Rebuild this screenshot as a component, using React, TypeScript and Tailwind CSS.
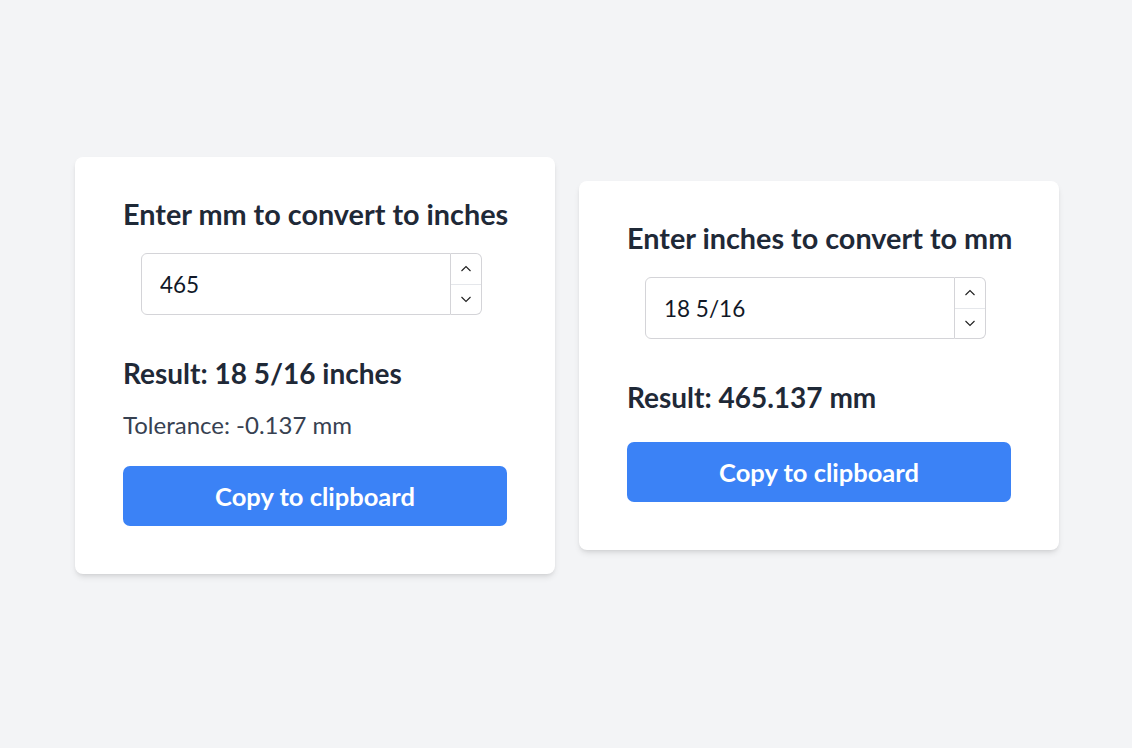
import React from "react";

function Spinner() {
  return (
    <div className="flex flex-col w-[31px] h-[62px] border border-l-0 border-[#d4d4d8] rounded-r-[6px] bg-white">
      <div className="flex-1 flex items-center justify-center border-b border-[#e5e7eb]">
        <svg width="12" height="8" viewBox="0 0 12 8" fill="none">
          <path d="M1.5 6 L6 1.5 L10.5 6" stroke="#1f1f1f" strokeWidth="1.1" />
        </svg>
      </div>
      <div className="flex-1 flex items-center justify-center">
        <svg width="12" height="8" viewBox="0 0 12 8" fill="none">
          <path d="M1.5 2 L6 6.5 L10.5 2" stroke="#1f1f1f" strokeWidth="1.1" />
        </svg>
      </div>
    </div>
  );
}

function NumberField({ value }: { value: string }) {
  return (
    <div className="flex ml-[18px] mt-[19.6px] w-[341px]">
      <input
        readOnly
        value={value}
        className="w-[310px] h-[62px] border border-[#d4d4d8] rounded-l-[6px] px-[18px] text-[22.5px] text-[#111827] bg-white outline-none"
        style={{ fontFamily: "Lato, 'Noto Sans', sans-serif" }}
      />
      <Spinner />
    </div>
  );
}

export default function App() {
  return (
    <div
      className="min-h-screen bg-[#f3f4f6] flex items-center justify-center gap-[24px] pb-[17px] pl-[2px]"
      style={{ fontFamily: "Lato, 'Noto Sans', sans-serif" }}
    >
      <div className="w-[480px] bg-white rounded-lg shadow-md px-[48px] pt-[38px] pb-[48px]">
        <h2 className="text-[28.8px] leading-[38.4px] font-bold text-[#1f2937] whitespace-nowrap">
          Enter mm to convert to inches
        </h2>
        <NumberField value="465" />
        <p className="mt-[39px] text-[28px] leading-[38.4px] font-bold text-[#1f2937]">
          Result: 18 5/16 inches
        </p>
        <p className="mt-[15.6px] text-[24px] leading-[33.6px] text-[#374151]">
          Tolerance: -0.137 mm
        </p>
        <button className="mt-[24.4px] w-full h-[60px] rounded-[7px] bg-[#3b82f6] text-white text-[25.5px] font-bold">
          Copy to clipboard
        </button>
      </div>
      <div className="w-[480px] bg-white rounded-lg shadow-md px-[48px] pt-[38px] pb-[48px]">
        <h2 className="text-[28.8px] leading-[38.4px] font-bold text-[#1f2937] whitespace-nowrap">
          Enter inches to convert to mm
        </h2>
        <NumberField value="18 5/16" />
        <p className="mt-[39px] text-[28px] leading-[38.4px] font-bold text-[#1f2937]">
          Result: 465.137 mm
        </p>
        <button className="mt-[25.6px] w-full h-[60px] rounded-[7px] bg-[#3b82f6] text-white text-[25.5px] font-bold">
          Copy to clipboard
        </button>
      </div>
    </div>
  );
}
